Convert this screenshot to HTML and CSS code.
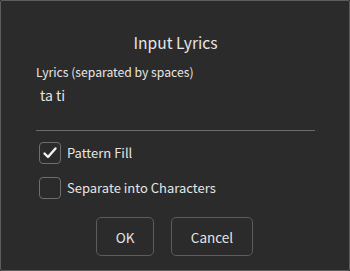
FILE: index.html
```html
<!DOCTYPE html>
<html lang="en">
  <head>
    <meta charset="UTF-8" />
    <title>Input Lyrics</title>
    <link rel="stylesheet" href="styles.css">
  </head>
  <body>
    <div class="dialog">
      <h1 class="title">Input Lyrics</h1>

      <div class="field">
        <div class="field-label">Lyrics (separated by spaces)</div>
        <div class="field-value">ta ti</div>
      </div>

      <div class="divider"></div>

      <label class="check">
        <span class="box checked">
          <svg width="16" height="16" viewBox="0 0 16 16">
            <polyline points="2.5,8.5 6,12 13.5,3.5" fill="none" stroke="#f2f2f2" stroke-width="2.4" stroke-linecap="round" stroke-linejoin="round" />
          </svg>
        </span>
        <span class="check-text">Pattern Fill</span>
      </label>

      <label class="check">
        <span class="box"></span>
        <span class="check-text">Separate into Characters</span>
      </label>

      <div class="buttons">
        <button class="button ok">OK</button>
        <button class="button cancel">Cancel</button>
      </div>
    </div>
  </body>
</html>
```

FILE: styles.css
```css
html,
body {
  margin: 0;
  background-color: #2b2b2b;
}

body {
  font-family: "Noto Sans CJK JP", "Noto Sans", sans-serif;
  color: #e6e6e6;
}

.dialog {
  box-sizing: border-box;
  width: 350px;
  height: 271px;
  border: 1px solid #5c5c5c;
  border-radius: 2px;
  padding: 0 34px 0 35px;
  display: flex;
  flex-direction: column;
}

.title {
  margin: 30px 0 0;
  font-size: 15.6px;
  font-weight: 400;
  line-height: 22px;
  text-align: center;
}

.field {
  margin-top: 10px;
}

.field-label {
  font-size: 12.2px;
  line-height: 18px;
}

.field-value {
  padding-left: 4px;
  margin-top: 5px;
  font-size: 14px;
  line-height: 18px;
}

.divider {
  height: 1px;
  margin-top: 26px;
  background-color: #6a6a6a;
}

.check {
  display: flex;
  align-items: center;
  gap: 6px;
  margin-top: 11px;
  padding-left: 3px;
}

.check + .check {
  margin-top: 13px;
}

.box {
  box-sizing: border-box;
  width: 22px;
  height: 22px;
  border: 1px solid #6e6e6e;
  border-radius: 4px;
  display: flex;
  align-items: center;
  justify-content: center;
}

.check-text {
  font-size: 13px;
  line-height: 20px;
}

.buttons {
  display: flex;
  justify-content: center;
  gap: 17px;
  margin-top: 18px;
  padding-right: 2px;
}

.button {
  box-sizing: border-box;
  height: 39px;
  background-color: #2b2b2b;
  border: 1px solid #5c5c5c;
  border-radius: 5px;
  color: #e6e6e6;
  font-family: inherit;
  font-size: 13.5px;
}

.ok {
  width: 58px;
}

.cancel {
  width: 82px;
}
```
